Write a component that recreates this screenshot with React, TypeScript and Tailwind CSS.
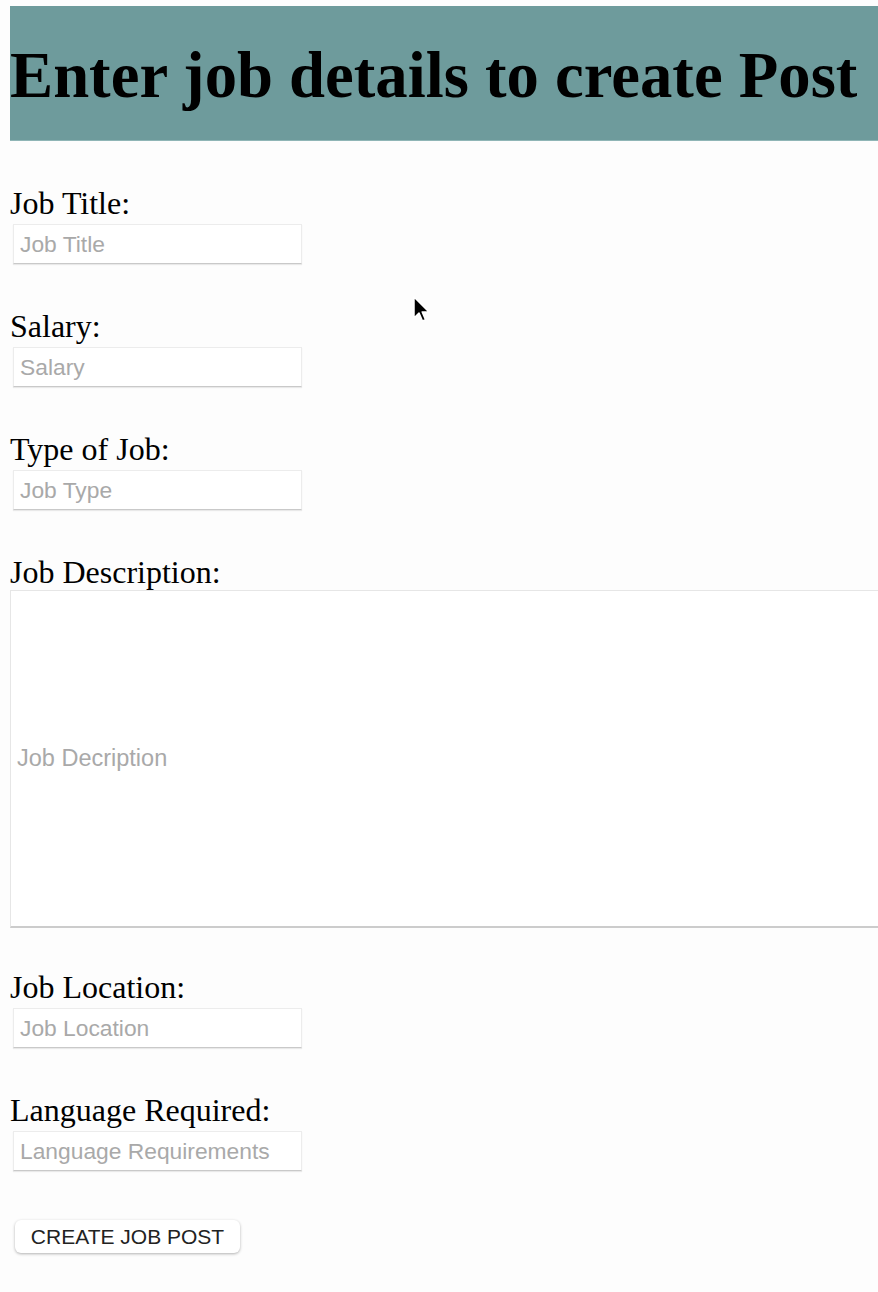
import React from "react";

const labelCls = "block text-[32px] leading-[36px] pt-[1px] text-black [font-family:'Liberation_Serif',serif]";
const inputCls =
  "block h-[40px] w-[289px] ml-[3px] mt-[3px] bg-white border border-[#ececec] border-b-[#c9c9c9] px-[6px] text-[22.8px] text-[#333] placeholder:text-[#a9a9a9] outline-none [font-family:'Liberation_Sans',Arial,sans-serif] shadow-[0_1px_1px_rgba(0,0,0,0.08)]";

function Field({ label, placeholder }: { label: string; placeholder: string }) {
  return (
    <div className="mt-[43px]">
      <label className={labelCls}>{label}</label>
      <input className={inputCls} placeholder={placeholder} />
    </div>
  );
}

export default function App() {
  return (
    <div className="relative min-h-[1292px] w-full overflow-hidden bg-[#fdfdfd] pt-[6px] pl-[10px]">
      <div className="flex h-[135px] items-center bg-[#6e9b9c] border-b border-[#8fb5b6]">
        <h1 className="mt-[4px] whitespace-nowrap text-[64.7px] font-bold leading-none text-black [font-family:'Liberation_Serif',serif]">
          Enter job details to create Post
        </h1>
      </div>

      <Field label="Job Title:" placeholder="Job Title" />
      <Field label="Salary:" placeholder="Salary" />
      <Field label="Type of Job:" placeholder="Job Type" />

      <div className="mt-[43px]">
        <label className={labelCls}>Job Description:</label>
        <input
          className="block h-[338px] w-[900px] bg-white border border-[#e6e6e6] border-b-2 border-b-[#cccccc] px-[6px] text-[23.5px] placeholder:text-[#a9a9a9] outline-none [font-family:'Liberation_Sans',Arial,sans-serif]"
          placeholder="Job Decription"
        />
      </div>

      <div className="mt-[40px]">
        <label className={labelCls}>Job Location:</label>
        <input className={inputCls} placeholder="Job Location" />
      </div>
      <Field label="Language Required:" placeholder="Language Requirements" />

      <button className="mt-[49px] ml-[5px] h-[33px] w-[225px] rounded-[6px] bg-white text-[21px] leading-none text-[#222] shadow-[0_1px_3px_rgba(0,0,0,0.3)] [font-family:'Liberation_Sans',Arial,sans-serif]">
        CREATE JOB POST
      </button>

      <svg
        className="absolute left-[412px] top-[296px]"
        width="20"
        height="28"
        viewBox="0 0 20 28"
      >
        <path d="M2 1 L2 22 L7 17 L10.5 25 L13.5 23.7 L10.2 16 L17 16 Z" fill="#000" stroke="#fff" strokeWidth="1.5" strokeLinejoin="round" />
      </svg>
    </div>
  );
}
